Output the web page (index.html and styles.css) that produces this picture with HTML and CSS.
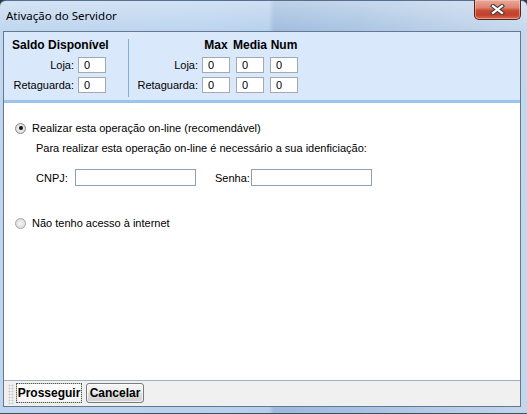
FILE: index.html
```html
<!DOCTYPE html>
<html lang="pt">
<head>
<meta charset="utf-8">
<title>Ativação do Servidor</title>
<link rel="stylesheet" href="styles.css">
</head>
<body>
<div class="window">
  <div class="titlebar">
    <span class="title">Ativação do Servidor</span>
    <div class="close">
      <svg width="15" height="11" viewBox="0 0 15 11">
        <line x1="3" y1="2" x2="12" y2="9" stroke="#3c3c3c" stroke-width="4.2" stroke-linecap="square"/>
        <line x1="12" y1="2" x2="3" y2="9" stroke="#3c3c3c" stroke-width="4.2" stroke-linecap="square"/>
        <line x1="3" y1="2" x2="12" y2="9" stroke="#ffffff" stroke-width="2.2" stroke-linecap="square"/>
        <line x1="12" y1="2" x2="3" y2="9" stroke="#ffffff" stroke-width="2.2" stroke-linecap="square"/>
      </svg>
    </div>
  </div>
  <div class="client">
    <div class="toppanel">
      <div class="grp grp-left">
        <div class="hdr hdr-span">Saldo Disponível</div>
        <span class="lbl">Loja:</span><span class="box">0</span>
        <span class="lbl">Retaguarda:</span><span class="box">0</span>
      </div>
      <div class="divider"></div>
      <div class="grp grp-right">
        <span></span>
        <div class="hdr cell">Max</div>
        <div class="hdr cell">Media</div>
        <div class="hdr cell">Num</div>
        <span class="lbl">Loja:</span>
        <div class="cell"><span class="box">0</span></div>
        <div class="cell"><span class="box">0</span></div>
        <div class="cell"><span class="box">0</span></div>
        <span class="lbl">Retaguarda:</span>
        <div class="cell"><span class="box">0</span></div>
        <div class="cell"><span class="box">0</span></div>
        <div class="cell"><span class="box">0</span></div>
      </div>
    </div>
    <div class="strip"></div>
    <div class="main">
      <div class="radio-row">
        <span class="radio checked"></span>
        <span>Realizar esta operação on-line (recomendável)</span>
      </div>
      <div class="info">Para realizar esta operação on-line é necessário a sua idenficiação:</div>
      <div class="fields">
        <span class="flbl flbl-cnpj">CNPJ:</span>
        <span class="edit"></span>
        <span class="flbl flbl-senha">Senha:</span>
        <span class="edit"></span>
      </div>
      <div class="radio-row radio-row-2">
        <span class="radio"></span>
        <span>Não tenho acesso à internet</span>
      </div>
    </div>
    <div class="footer">
      <span class="grip"></span>
      <button class="btn btn-focus">Prosseguir</button>
      <button class="btn">Cancelar</button>
    </div>
  </div>
</div>
</body>
</html>
```

FILE: styles.css
```css
* { box-sizing: border-box; }
html, body { margin: 0; padding: 0; }
body {
  width: 527px;
  height: 414px;
  overflow: hidden;
  background: #2b3a4c;
  font-family: "Liberation Sans", Arial, sans-serif;
  font-size: 11px;
  color: #000;
}
.window {
  width: 527px;
  height: 414px;
  display: flex;
  flex-direction: column;
  border-top: 1px solid #56708d;
  border-bottom: 1px solid #3d4f64;
  border-radius: 6px 6px 0 0;
  background:
    linear-gradient(180deg, rgba(255,255,255,0.35) 0, rgba(255,255,255,0.05) 30px, rgba(255,255,255,0) 100%),
    linear-gradient(90deg, #bdd5ee 0, #b8d2ee 40%, #b4cfec 51%, #9bbadc 52%, #a6c2e2 68%, #b6cde7 85%, #c2d6ec 100%);
}
.titlebar {
  height: 30px;
  flex: none;
  display: flex;
  align-items: flex-start;
}
.title {
  font-family: "Noto Sans", "Open Sans", sans-serif;
  font-size: 11.5px;
  color: #000;
  margin: 7px 0 0 6px;
  line-height: 16px;
}
.close {
  margin-left: auto;
  margin-right: 6px;
  margin-top: -1px;
  width: 47px;
  height: 20px;
  border: 1px solid #5b2219;
  border-top: none;
  border-radius: 0 0 5px 5px;
  background: linear-gradient(180deg, #e9a899 0, #dc8471 40%, #c94a35 55%, #c2402b 80%, #d87055 100%);
  box-shadow: inset 0 0 0 1px rgba(255,220,210,0.45);
  display: flex;
  align-items: center;
  justify-content: center;
}
.client {
  flex: none;
  height: 376px;
  margin: 0 6px 0 3px;
  border: 1px solid #65788f;
  display: flex;
  flex-direction: column;
  background: #fff;
}
.toppanel {
  flex: none;
  height: 68px;
  background: #d9e8fa;
  display: flex;
  padding: 6px 0 0 8px;
}
.grp {
  display: grid;
  grid-template-rows: 15px 16px 16px;
  row-gap: 4px;
  align-content: start;
}
.grp-left {
  grid-template-columns: 62px 28px;
  column-gap: 4px;
}
.grp-right {
  grid-template-columns: 70px 34px 34px 34px;
}
.hdr {
  font-weight: bold;
  font-size: 12px;
  line-height: 15px;
  margin-bottom: 4px;
  white-space: nowrap;
}
.hdr-span { grid-column: 1 / 3; }
.cell {
  display: flex;
  justify-content: center;
}
.lbl {
  text-align: right;
  line-height: 16px;
  white-space: nowrap;
  padding-right: 1px;
}
.grp-left .lbl { padding-right: 0; }
.box {
  display: block;
  width: 28px;
  height: 16px;
  background: #fff;
  border: 1px solid #a3a9b1;
  padding-left: 5px;
  line-height: 14px;
}
.divider {
  width: 1px;
  background: #7eb0de;
  margin: 1px 0 3px 22px;
}
.strip {
  flex: none;
  height: 3px;
  background: #9ac4ea;
}
.main {
  flex: 1;
  background: #fff;
  padding: 17px 0 0 11px;
}
.radio-row {
  display: flex;
  align-items: center;
  height: 16px;
  gap: 6px;
  line-height: 16px;
}
.radio-row-2 { margin-top: 29px; }
.radio {
  width: 11px;
  height: 11px;
  border-radius: 50%;
  border: 1px solid #a5a5a5;
  background: radial-gradient(circle at 50% 50%, #f4f4f4 0, #e2e2e2 60%, #d4d4d4 100%);
  position: relative;
}
.radio.checked { border-color: #8a8a8a; }
.radio.checked::after {
  content: "";
  position: absolute;
  left: 2.5px;
  top: 2.5px;
  width: 4px;
  height: 4px;
  border-radius: 50%;
  background: #111;
}
.info {
  margin: 4px 0 0 21px;
  line-height: 16px;
}
.fields {
  display: flex;
  align-items: center;
  margin: 13px 0 0 21px;
  height: 17px;
}
.flbl { line-height: 16px; }
.flbl-cnpj { width: 39px; }
.flbl-senha { width: 36px; margin-left: 19px; }
.edit {
  display: block;
  width: 121px;
  height: 17px;
  border: 1px solid #8aa0b8;
  background: #fff;
}
.footer {
  flex: none;
  height: 26px;
  background: #f0f0f0;
  border-top: 1px solid #a0b0c2;
  display: flex;
  align-items: flex-start;
  padding: 2px 0 0 4px;
  gap: 0;
}
.grip {
  width: 6px;
  height: 20px;
  margin-top: 1px;
  background: radial-gradient(circle, #c8c8c8 0.8px, transparent 1.2px) 0 0 / 3px 3px;
}
.btn {
  font-family: "Liberation Sans", Arial, sans-serif;
  font-weight: bold;
  font-size: 12px;
  height: 20px;
  padding: 0;
  color: #000;
  line-height: 17px;
  cursor: default;
}
.btn-focus {
  margin-left: 2px;
  width: 66px;
  border: 1px dotted #2c5fb8;
  background: linear-gradient(#ffffff, #f4f4f4) padding-box, #e8c24e border-box;
}
.btn-focus + .btn {
  margin-left: 4px;
  width: 58px;
  border: 1px solid #7a7a7a;
  border-radius: 3px;
  background: linear-gradient(180deg, #f5f5f5 0, #ececec 48%, #dedede 52%, #d2d2d2 100%);
  box-shadow: inset 0 0 0 1px rgba(255,255,255,0.7);
}
```
